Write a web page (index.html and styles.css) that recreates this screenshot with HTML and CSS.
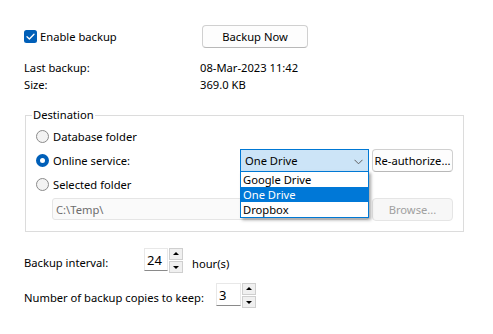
FILE: index.html
```html
<!DOCTYPE html>
<html lang="en">
<head>
    <meta charset="UTF-8">
    <title>Backup Settings</title>
    <link rel="stylesheet" href="styles.css">
</head>
<body>
    <div class="page">

        <!-- Enable + Backup Now -->
        <div class="top-row">
            <label class="check">
                <svg class="check-box" width="13" height="13" viewBox="0 0 13 13">
                    <rect x="0" y="0" width="13" height="13" rx="2.5" fill="#005fb8"/>
                    <path d="M3 6.8 L5.4 9 L10 4.2" fill="none" stroke="#fff" stroke-width="1.3" stroke-linecap="round" stroke-linejoin="round"/>
                </svg>
                Enable backup
            </label>
            <button class="btn btn-now">Backup Now</button>
        </div>

        <!-- Info -->
        <div class="info">
            <span>Last backup:</span><span>08-Mar-2023 11:42</span>
            <span>Size:</span><span>369.0 KB</span>
        </div>

        <!-- Destination group -->
        <fieldset class="group">
            <legend>Destination</legend>
            <div class="dest-grid">
                <div class="radio-row"><span class="radio"></span>Database folder</div>

                <div class="radio-row"><span class="radio on"></span>Online service:</div>
                <div class="combo-wrap">
                    <div class="combo">
                        One Drive
                        <svg class="chev" width="9" height="6" viewBox="0 0 9 6"><path d="M0.5 0.8 L4.5 4.8 L8.5 0.8" fill="none" stroke="#5f5f5f" stroke-width="1"/></svg>
                    </div>
                    <ul class="dropdown">
                        <li>Google Drive</li>
                        <li class="sel">One Drive</li>
                        <li>Dropbox</li>
                    </ul>
                </div>
                <button class="btn btn-auth">Re-authorize...</button>

                <div class="radio-row"><span class="radio"></span>Selected folder</div>

                <div class="path-box">C:\Temp\</div>
                <button class="btn btn-browse" disabled>Browse...</button>
            </div>
        </fieldset>

        <!-- Interval / copies -->
        <div class="spin-row row-interval">
            <span class="spin-label">Backup interval:</span>
            <div class="spin">
                <div class="spin-box">24</div>
                <div class="spin-btns">
                    <span class="spin-up"></span>
                    <span class="spin-down"></span>
                </div>
            </div>
            <span class="unit">hour(s)</span>
        </div>

        <div class="spin-row row-copies">
            <span class="spin-label">Number of backup copies to keep:</span>
            <div class="spin">
                <div class="spin-box">3</div>
                <div class="spin-btns">
                    <span class="spin-up"></span>
                    <span class="spin-down"></span>
                </div>
            </div>
        </div>

    </div>
</body>
</html>
```

FILE: styles.css
```css
/* General */
body {
    margin: 0;
    background: #fff;
    font-family: 'Noto Sans', 'Open Sans', sans-serif;
    font-size: 11.2px;
    color: #000;
}

.page {
    padding: 25px 0 0 24px;
}

/* Buttons */
.btn {
    font-family: inherit;
    font-size: 11.2px;
    color: #000;
    background: #fdfdfd;
    border: 1px solid #d0d0d0;
    border-bottom-color: #b8b8b8;
    border-radius: 4px;
    padding: 0;
    height: 23px;
    white-space: nowrap;
}

/* Top row */
.top-row {
    display: flex;
    align-items: center;
    height: 23px;
}

.check {
    display: flex;
    align-items: center;
    gap: 3px;
    width: 178px;
}

.btn-now {
    width: 106px;
}

/* Info rows */
.info {
    display: grid;
    grid-template-columns: 176px auto;
    grid-auto-rows: 17px;
    align-items: center;
    margin-top: 11px;
}

/* Destination group */
.group {
    margin: 14px 0 0 1px;
    width: 437px;
    min-width: 0;
    padding: 0 0 11px 0;
    border: 1px solid #dcdcdc;
    border-radius: 0;
    box-sizing: content-box;
}

.group legend {
    margin-left: 6px;
    padding: 0 1px;
    line-height: 16px;
}

.dest-grid {
    display: grid;
    grid-template-columns: 201px 129px 81px;
    column-gap: 3px;
    grid-auto-rows: 24px;
    margin-left: 10px;
    padding-top: 1px;
}

.dest-grid .radio-row {
    grid-column: 1;
}

.radio-row {
    display: flex;
    align-items: center;
    gap: 4px;
    min-width: 0;
}

.radio {
    width: 11px;
    height: 11px;
    border: 1px solid #8b8b8b;
    border-radius: 50%;
    background: #f3f3f3;
    flex: none;
}

.radio.on {
    width: 5px;
    height: 5px;
    border: 4px solid #005fb8;
    background: #fff;
}

/* Combo + dropdown */
.combo-wrap {
    position: relative;
    align-self: center;
    min-width: 0;
}

.combo {
    height: 21px;
    border: 1px solid #0078d4;
    background: #cce4f7;
    display: flex;
    align-items: center;
    padding-left: 4px;
    position: relative;
}

.chev {
    position: absolute;
    right: 5px;
    top: 9px;
}

.dropdown {
    position: absolute;
    left: 0;
    top: 22px;
    width: 127px;
    margin: 0;
    padding: 0;
    list-style: none;
    background: #fff;
    border: 1px solid #0078d4;
    box-shadow: 2px 2px 3px rgba(0, 0, 0, 0.35);
    z-index: 5;
}

.dropdown li {
    height: 15px;
    line-height: 15px;
    padding-left: 2px;
}

.dropdown li.sel {
    background: #0078d7;
    color: #fff;
}

.btn-auth {
    align-self: center;
    width: 81px;
    min-width: 0;
}

/* Path + browse */
.path-box {
    grid-column: 1 / span 2;
    margin: 2px 0 0 16px;
    height: 20px;
    border: 1px solid #e5e5e5;
    border-radius: 3px;
    background: #fafafa;
    color: #6d6d6d;
    display: flex;
    align-items: center;
    padding-left: 3px;
}

.btn-browse {
    margin-top: 2px;
    width: 81px;
    color: #a0a0a0;
    background: #f7f7f7;
    border-color: #e5e5e5;
}

/* Spin rows */
.spin-row {
    display: flex;
    align-items: center;
}

.row-interval {
    margin-top: 16px;
}

.row-interval .spin-label {
    width: 120px;
}

.row-copies {
    margin-top: 10px;
}

.row-copies .spin-label {
    width: 192px;
}

.spin-label {
    padding-top: 3px;
    white-space: nowrap;
}

.spin {
    display: flex;
    gap: 1px;
}

.spin-box {
    width: 20px;
    height: 21px;
    border: 1px solid #e8e8e8;
    border-bottom-color: #8a8a8a;
    padding-left: 2px;
    display: flex;
    align-items: center;
    font-size: 13px;
    background: #fff;
}

.row-copies .spin-box {
    width: 21px;
}

.spin-btns {
    display: flex;
    flex-direction: column;
    gap: 1px;
}

.spin-up,
.spin-down {
    width: 12px;
    height: 10px;
    border: 1px solid #cfcfcf;
    background: #f0f0f0;
    position: relative;
}

.spin-up::after,
.spin-down::after {
    content: '';
    position: absolute;
    left: 3px;
    border-left: 3px solid transparent;
    border-right: 3px solid transparent;
}

.spin-up::after {
    top: 3px;
    border-bottom: 3px solid #000;
}

.spin-down::after {
    top: 4px;
    border-top: 3px solid #000;
}

.unit {
    margin-left: 9px;
    padding-top: 5px;
}
```
